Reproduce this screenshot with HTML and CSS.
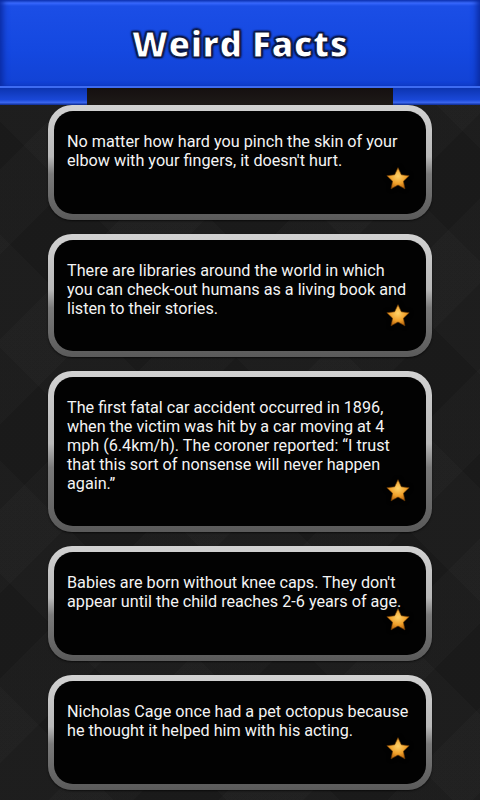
FILE: index.html
```html
<!DOCTYPE html>
<html>
<head>
<meta charset="utf-8">
<link rel="stylesheet" href="styles.css">
</head>
<body>
<header class="banner">
  <div class="banner-main"><h1 class="title">Weird Facts</h1></div>
  <div class="banner-sub">
    <div class="wing wing-left"></div>
    <div class="tab"></div>
    <div class="wing wing-right"></div>
  </div>
</header>
<main class="list">
  <div class="card"><p class="fact">No matter how hard you pinch the skin of your elbow with your fingers, it doesn't hurt.</p><span class="star"><svg viewBox="0 0 24 24" width="26" height="26"><defs><radialGradient id="g1" cx="50%" cy="40%" r="60%"><stop offset="0" stop-color="#ffd36a"/><stop offset="0.6" stop-color="#f0a02a"/><stop offset="1" stop-color="#b8640e"/></radialGradient></defs><path d="M12 1.5l3.1 6.6 7.2.9-5.3 5 1.4 7.1L12 17.6l-6.4 3.5 1.4-7.1-5.3-5 7.2-.9z" fill="url(#g1)" stroke="#6b3a05" stroke-width="0.6"/></svg></span></div>
  <div class="card"><p class="fact">There are libraries around the world in which you can check-out humans as a living book and listen to their stories.</p><span class="star"><svg viewBox="0 0 24 24" width="26" height="26"><path d="M12 1.5l3.1 6.6 7.2.9-5.3 5 1.4 7.1L12 17.6l-6.4 3.5 1.4-7.1-5.3-5 7.2-.9z" fill="url(#g1)" stroke="#6b3a05" stroke-width="0.6"/></svg></span></div>
  <div class="card"><p class="fact">The first fatal car accident occurred in 1896, when the victim was hit by a car moving at 4 mph (6.4km/h). The coroner reported: “I trust that this sort of nonsense will never happen again.”</p><span class="star"><svg viewBox="0 0 24 24" width="26" height="26"><path d="M12 1.5l3.1 6.6 7.2.9-5.3 5 1.4 7.1L12 17.6l-6.4 3.5 1.4-7.1-5.3-5 7.2-.9z" fill="url(#g1)" stroke="#6b3a05" stroke-width="0.6"/></svg></span></div>
  <div class="card"><p class="fact">Babies are born without knee caps. They don't appear until the child reaches 2-6 years of age.</p><span class="star"><svg viewBox="0 0 24 24" width="26" height="26"><path d="M12 1.5l3.1 6.6 7.2.9-5.3 5 1.4 7.1L12 17.6l-6.4 3.5 1.4-7.1-5.3-5 7.2-.9z" fill="url(#g1)" stroke="#6b3a05" stroke-width="0.6"/></svg></span></div>
  <div class="card"><p class="fact">Nicholas Cage once had a pet octopus because he thought it helped him with his acting.</p><span class="star"><svg viewBox="0 0 24 24" width="26" height="26"><path d="M12 1.5l3.1 6.6 7.2.9-5.3 5 1.4 7.1L12 17.6l-6.4 3.5 1.4-7.1-5.3-5 7.2-.9z" fill="url(#g1)" stroke="#6b3a05" stroke-width="0.6"/></svg></span></div>
</main>
</body>
</html>
```
FILE: styles.css
```css
* { box-sizing: border-box; }
html, body { margin: 0; padding: 0; }
body {
  width: 480px;
  height: 800px;
  overflow: hidden;
  font-family: Roboto, "Noto Sans", sans-serif;
  background-color: #1c1c1c;
  background-image:
    repeating-linear-gradient(135deg, rgba(255,255,255,0.012) 0 60px, rgba(0,0,0,0.04) 60px 120px),
    repeating-linear-gradient(45deg, rgba(255,255,255,0.01) 0 80px, rgba(0,0,0,0.03) 80px 160px);
}
.banner { display: flex; flex-direction: column; }
.banner-main {
  height: 88px;
  background:
    linear-gradient(180deg, #0f37b8 0px, #3b6cff 3px, #1b4ee6 6px, #1448e0 60%, #1242d4 100%);
  border-bottom: 2px solid #3e6cf2;
  display: flex;
  align-items: center;
  justify-content: center;
  box-shadow: inset 6px 0 6px -3px #0a2aa0, inset -6px 0 6px -3px #0a2aa0;
}
.title {
  margin: 0;
  font-family: "Open Sans", "DejaVu Sans", sans-serif;
  font-weight: 800;
  font-size: 35px;
  letter-spacing: 0.5px;
  color: #ffffff;
  -webkit-text-stroke: 1px #0a1440;
  text-shadow: 0 0 2px #08123a, 1px 1px 2px #08123a, -1px -1px 2px #08123a, 1px -1px 2px #08123a, -1px 1px 2px #08123a;
}
.banner-sub { display: flex; height: 17px; }
.wing {
  width: 87px;
  background: linear-gradient(180deg, #0c34b0 0%, #1a48d8 70%, #3a66ee 85%, #0b2a90 100%);
}
.tab { flex: 1; background: linear-gradient(180deg, #151010, #1e1a18); }
.list {
  display: flex;
  flex-direction: column;
  gap: 14px;
  padding: 0 48px;
}
.card {
  position: relative;
  min-height: 115px;
  border-radius: 24px;
  padding: 6px;
  background: linear-gradient(180deg, #d2d2d2 0%, #b8b8b8 45%, #7a7a7a 60%, #5a5a5a 100%);
  box-shadow: 0 1px 2px rgba(0,0,0,0.6);
}
.card::before {
  content: "";
  position: absolute;
  inset: 6px;
  border-radius: 19px;
  background: #020202;
}
.fact {
  position: relative;
  margin: 0;
  padding: 21px 14px 33px 13px;
  font-size: 16.2px;
  line-height: 19px;
  color: #f4f4f4;
}
.star {
  position: absolute;
  right: 21px;
  bottom: 28px;
  width: 26px;
  height: 26px;
  filter: drop-shadow(0 0 2px rgba(0,0,0,0.8));
}
.star svg { display: block; }
```
